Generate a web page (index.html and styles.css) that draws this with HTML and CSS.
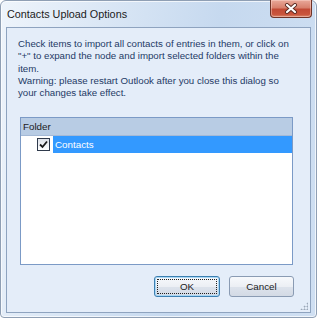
FILE: index.html
```html
<!DOCTYPE html>
<html>
<head>
<meta charset="utf-8">
<link rel="stylesheet" href="styles.css">
</head>
<body>
<div class="window">
  <div class="titlebar">
    <div class="title">Contacts Upload Options</div>
    <div class="close">
      <svg width="14" height="11" viewBox="0 0 14 11">
        <path d="M3 2 L11 9 M11 2 L3 9" stroke="#5a2a22" stroke-width="4" stroke-linecap="round"/>
        <path d="M3 2 L11 9 M11 2 L3 9" stroke="#ffffff" stroke-width="2.2" stroke-linecap="round"/>
      </svg>
    </div>
  </div>
  <div class="client">
    <p class="info">Check items to import all contacts of entries in them, or click on<br>"+" to expand the node and import selected folders within the<br>item.<br>Warning: please restart Outlook after you close this dialog so<br>your changes take effect.</p>
    <div class="listbox">
      <div class="header">Folder</div>
      <div class="row">
        <span class="check">
          <svg width="9" height="9" viewBox="0 0 9 9"><path d="M1 4.5 L3.5 7 L8 1.5" fill="none" stroke="#1a1a1a" stroke-width="1.8"/></svg>
        </span>
        <span class="label">Contacts</span>
      </div>
    </div>
    <div class="buttons">
      <button class="btn default"><span class="focus">OK</span></button>
      <button class="btn">Cancel</button>
    </div>
    <div class="grip"></div>
  </div>
</div>
</body>
</html>
```
FILE: styles.css
```css
html, body {
  margin: 0;
  padding: 0;
  background: #ffffff;
}
body {
  width: 317px;
  height: 320px;
  font-family: "Liberation Sans", Arial, sans-serif;
}
.window {
  box-sizing: border-box;
  width: 317px;
  height: 318px;
  border: 1px solid #8f9fb4;
  border-radius: 6px 6px 4px 4px;
  background: linear-gradient(100deg, #eef4fb 0%, #d6e4f4 35%, #c6d9ef 60%, #cfdff2 100%);
  box-shadow: inset 0 0 0 1px rgba(255,255,255,0.7);
  display: flex;
  flex-direction: column;
}
.titlebar {
  height: 26px;
  display: flex;
  align-items: flex-start;
}
.title {
  padding: 7px 0 0 6px;
  font-family: "Liberation Sans", Arial, sans-serif;
  font-size: 10.8px;
  color: #1b1b1b;
}
.close {
  margin-left: auto;
  margin-right: 4px;
  margin-top: -1px;
  width: 42px;
  height: 18px;
  box-sizing: border-box;
  border: 1px solid #6e3327;
  border-top: none;
  border-radius: 0 0 4px 4px;
  background: linear-gradient(#e9a99a 0%, #d8806d 45%, #c24a35 55%, #c9553c 85%, #d98a6e 100%);
  box-shadow: inset 0 0 0 1px rgba(255,220,210,0.45);
  display: flex;
  align-items: center;
  justify-content: center;
}
.client {
  flex: 1;
  margin: 0 5px 4px 5px;
  border: 1px solid #8ea3bf;
  background: #e4edf9;
  position: relative;
  display: flex;
  flex-direction: column;
}
.info {
  margin: 10px 0 0 11px;
  font-size: 9.7px;
  line-height: 12.3px;
  white-space: nowrap;
  color: #1e3a66;
}
.listbox {
  margin: 18px 0 0 13px;
  width: 273px;
  height: 148px;
  box-sizing: border-box;
  border: 1px solid #7b9ac6;
  background: #ffffff;
}
.header {
  height: 18px;
  box-sizing: border-box;
  background: #b8cce4;
  border-bottom: 1px solid #a4b9d6;
  font-size: 9.8px;
  line-height: 18px;
  padding-left: 2px;
  color: #1b1b1b;
}
.row {
  height: 17px;
  display: flex;
  align-items: center;
}
.check {
  margin-left: 16px;
  width: 13px;
  height: 13px;
  box-sizing: border-box;
  border: 1px solid #2f3a4c;
  background: linear-gradient(#dfe3ea, #ffffff);
  display: flex;
  align-items: center;
  justify-content: center;
}
.label {
  margin-left: 3px;
  flex: 1;
  height: 17px;
  background: #3399ff;
  color: #ffffff;
  font-size: 9.8px;
  line-height: 17px;
  padding-left: 2px;
}
.buttons {
  display: flex;
  justify-content: flex-end;
  gap: 9px;
  margin: 11px 0 0 0;
  padding-right: 16px;
}
.btn {
  height: 21px;
  box-sizing: border-box;
  border: 1px solid #8a9bb3;
  border-radius: 3px;
  background: linear-gradient(#f7f9fc 0%, #eceff4 50%, #dde3ec 51%, #d3dae5 100%);
  font-family: "Liberation Sans", Arial, sans-serif;
  font-size: 9.8px;
  color: #1b1b1b;
  padding: 0;
  width: 65px;
}
.btn.default {
  width: 66px;
  border-color: #3c7fb1;
  box-shadow: inset 0 0 0 1px #a9d7f5;
  padding: 2px;
}
.focus {
  display: block;
  height: 100%;
  box-sizing: border-box;
  border: 1px dotted #222;
  line-height: 13px;
}
.grip {
  position: absolute;
  right: 2px;
  bottom: 2px;
  width: 8px;
  height: 8px;
  background:
    radial-gradient(circle, #9aa7b8 0.8px, transparent 1.2px) 0 0 / 3px 3px;
  clip-path: polygon(100% 0, 100% 100%, 0 100%);
}
```
